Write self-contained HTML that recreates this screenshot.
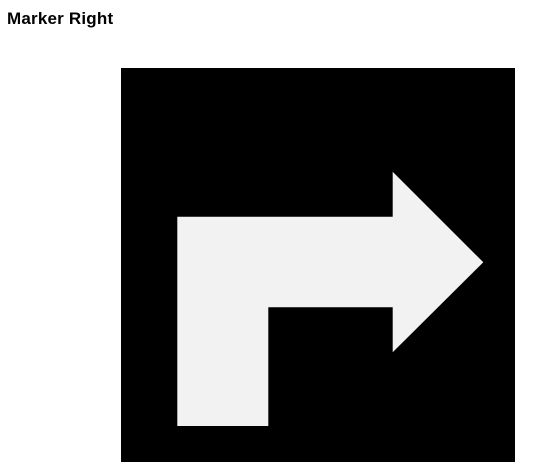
<!DOCTYPE html>
<html><head><style>
html,body{margin:0;padding:0;background:#fff;width:537px;height:473px;overflow:hidden}
h1{position:absolute;left:7px;top:9px;margin:0;font:bold 17px "Liberation Sans",sans-serif;color:#000;letter-spacing:0.2px}
svg{position:absolute;left:0;top:0}
</style></head><body>
<h1>Marker Right</h1>
<svg width="537" height="473"><rect x="121" y="68" width="394" height="394" fill="#000"/>
<polygon points="177.3,216.7 392.7,216.7 392.7,171.7 483.3,262.3 392.7,352.3 392.7,307.3 268.3,307.3 268.3,426 177.3,426" fill="#f2f2f2"/></svg>
</body></html>
